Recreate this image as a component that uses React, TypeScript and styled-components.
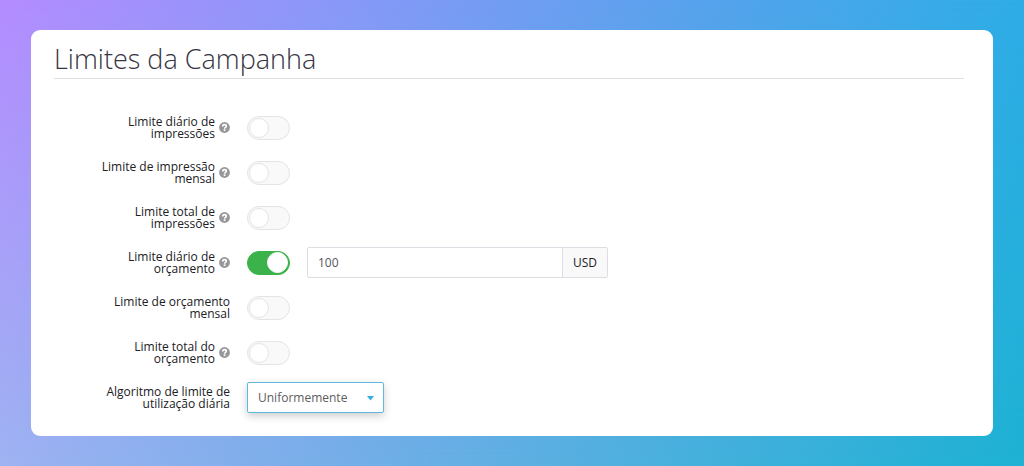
import React, { useId, useState } from "react";
import styled, { createGlobalStyle } from "styled-components";

const GlobalStyle = createGlobalStyle`
  *, *::before, *::after { box-sizing: border-box; }
  body {
    margin: 0;
    font-family: "Open Sans", "Noto Sans", sans-serif;
    font-size: 12px;
    color: #202024;
  }
  input, select { font: inherit; }
`;

const Page = styled.main`
  position: relative;
  isolation: isolate;
  display: flex;
  min-height: 100vh;
  padding: 30px 31px;
  background: linear-gradient(to right, #b48cff 0%, #8998f8 33%, #5aa2ed 66%, #2eade7 100%);

  /* second ramp that fades in towards the bottom edge */
  &::before {
    content: "";
    position: absolute;
    inset: 0;
    z-index: -1;
    background: linear-gradient(to right, #9eb2f2 0%, #75aee8 33%, #48b0dc 66%, #1db1d3 100%);
    mask-image: linear-gradient(to bottom, transparent, #000);
  }
`;

const Card = styled.form`
  flex: 1;
  padding: 11px 29px 16px 23px;
  border-radius: 9px;
  background: #fff;
`;

const Title = styled.h1`
  margin: 0 0 26px;
  height: 38px;
  border-bottom: 1px solid #dfdfe1;
  font-size: 27px;
  font-weight: 300;
  line-height: 36px;
  color: #36343f;
`;

const Rows = styled.div`
  display: grid;
  grid-auto-rows: minmax(45px, auto);
`;

const Row = styled.div`
  display: grid;
  grid-template-columns: 176px auto 1fr;
  align-items: center;
  column-gap: 17px;
`;

const LabelCell = styled.div`
  display: flex;
  align-items: center;
  justify-content: flex-end;
  gap: 4px;
`;

const Label = styled.label`
  max-width: 130px;
  line-height: 12px;
  text-align: right;
`;

const HelpIcon = styled.svg`
  flex: none;
  width: 11px;
  height: 11px;
`;

const Switch = styled.input`
  appearance: none;
  display: flex;
  align-items: center;
  width: 43px;
  height: 24px;
  margin: 0;
  padding: 0 1px;
  border: 1px solid #e4e4e5;
  border-radius: 12px;
  background: #f9f9f9;
  cursor: pointer;

  &::before {
    content: "";
    width: 20px;
    height: 20px;
    border: 1px solid #e4e4e5;
    border-radius: 50%;
    background: #fff;
  }
  &:checked {
    justify-content: flex-end;
    border-color: #3bb34a;
    background: #3bb34a;
  }
  &:checked::before {
    width: 21px;
    height: 21px;
    border-color: #fff;
  }
`;

const InputGroup = styled.div`
  display: flex;
  width: 301px;
  height: 31px;
  border: 1px solid #dddde3;
  border-radius: 2px;
`;

const AmountInput = styled.input`
  flex: 1;
  min-width: 0;
  padding: 0 10px;
  border: 0;
  outline: 0;
  background: none;
  color: #55555b;
`;

const Unit = styled.span`
  display: flex;
  align-items: center;
  padding: 0 10px;
  border-left: 1px solid #dddde3;
  background: #f9f9fa;
`;

const SelectBox = styled.div`
  display: grid;
  align-items: center;
  width: 137px;
  height: 31px;
  border: 1px solid #5eb8df;
  border-radius: 2px;
  background: #fff;
  box-shadow: 0 3px 8px rgba(0, 0, 0, 0.2);
`;

const Select = styled.select`
  grid-area: 1 / 1;
  appearance: none;
  width: 100%;
  height: 100%;
  padding: 0 10px;
  border: 0;
  outline: 0;
  background: none;
  color: #5c5c60;
`;

const Caret = styled.svg`
  grid-area: 1 / 1;
  justify-self: end;
  width: 7px;
  height: 5px;
  margin: 2px 9px 0 0;
  pointer-events: none;
`;

function Help() {
  return (
    <HelpIcon viewBox="0 0 11 11" role="img" aria-label="Ajuda">
      <circle cx="5.5" cy="5.5" r="5.4" fill="#97979b" />
      <path d="M3.7 4.4C3.7 2 7.3 2.2 7.3 4.2C7.3 5.4 5.6 5.3 5.6 6.7" fill="none" stroke="#fff" strokeWidth="1.6" />
      <path d="M4.7 7.3h1.8v1.6H4.7z" fill="#fff" />
    </HelpIcon>
  );
}

type LimitProps = { label: string; help?: boolean; enabled?: boolean };

function Limit({ label, help = true, enabled = false }: LimitProps) {
  const id = useId();
  const [on, setOn] = useState(enabled);
  const [amount, setAmount] = useState("100");
  return (
    <Row>
      <LabelCell>
        <Label htmlFor={id}>{label}</Label>
        {help && <Help />}
      </LabelCell>
      <Switch id={id} type="checkbox" role="switch" checked={on} onChange={(e) => setOn(e.target.checked)} />
      {on && (
        <InputGroup>
          <AmountInput aria-label={label} value={amount} onChange={(e) => setAmount(e.target.value)} />
          <Unit>USD</Unit>
        </InputGroup>
      )}
    </Row>
  );
}

const limits: LimitProps[] = [
  { label: "Limite diário de impressões" },
  { label: "Limite de impressão mensal" },
  { label: "Limite total de impressões" },
  { label: "Limite diário de orçamento", enabled: true },
  { label: "Limite de orçamento mensal", help: false },
  { label: "Limite total do orçamento" },
];

export default function App() {
  return (
    <>
      <GlobalStyle />
      <Page>
        <Card>
          <Title>Limites da Campanha</Title>
          <Rows>
            {limits.map((limit) => (
              <Limit key={limit.label} {...limit} />
            ))}
            <Row>
              <LabelCell>
                <Label htmlFor="algorithm">Algoritmo de limite de utilização diária</Label>
              </LabelCell>
              <SelectBox>
                <Select id="algorithm">
                  <option>Uniformemente</option>
                </Select>
                <Caret viewBox="0 0 7 5" aria-hidden="true">
                  <path d="M0 0h7L3.5 4.5z" fill="#35aee2" />
                </Caret>
              </SelectBox>
            </Row>
          </Rows>
        </Card>
      </Page>
    </>
  );
}
